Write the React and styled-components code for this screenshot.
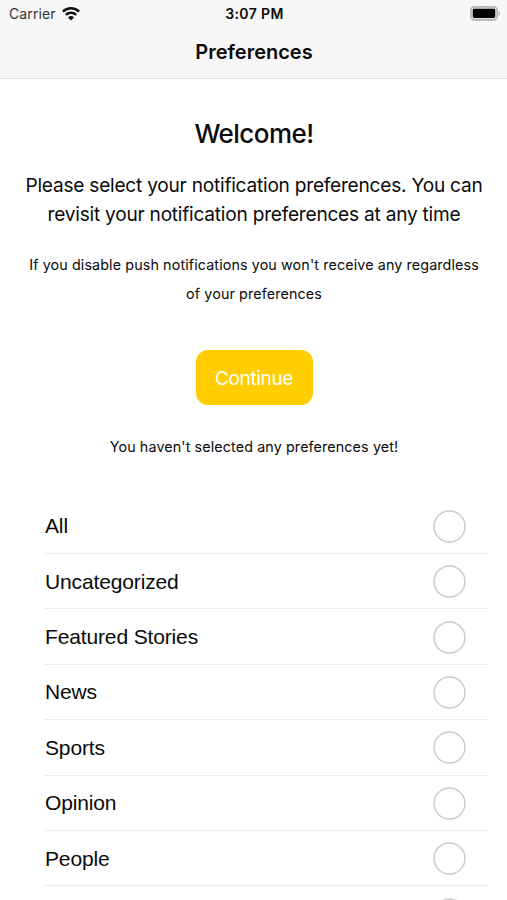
import React, { useState } from "react";
import styled, { createGlobalStyle } from "styled-components";

const GlobalStyle = createGlobalStyle`
  * {
    box-sizing: border-box;
  }
  body {
    margin: 0;
    background: #ffffff;
    color: #0a0a0a;
    font-family: Inter, "Liberation Sans", sans-serif;
  }
`;

const Screen = styled.div`
  display: flex;
  flex-direction: column;
  width: 507px;
  height: 900px;
  overflow: hidden;
`;

const StyledHeader = styled.header`
  flex: none;
  height: 79px;
  background: #f7f7f7;
  border-bottom: 1px solid #e0e0e0;
`;

const StatusBar = styled.div`
  display: grid;
  grid-template-columns: 1fr auto 1fr;
  align-items: center;
  height: 27px;
  padding: 0 7px 0 9px;
`;

const Carrier = styled.span`
  display: flex;
  align-items: center;
  gap: 6px;
  font-size: 14px;
  line-height: 17px;
  letter-spacing: 0.1px;
  color: #333333;
`;

const Clock = styled.span`
  font-size: 14px;
  font-weight: 600;
  line-height: 17px;
  letter-spacing: 0.4px;
`;

const Battery = styled.svg`
  justify-self: end;
  margin-right: -1px;
`;

const StyledTitle = styled.h1`
  margin: 0;
  padding: 12px 0 0 1px;
  font-size: 20px;
  font-weight: 600;
  line-height: 26px;
  letter-spacing: 0;
  text-align: center;
`;

const Intro = styled.section`
  display: flex;
  flex: none;
  flex-direction: column;
  align-items: center;
  height: 419.6px;
  padding: 39px 0 0 1px;
  text-align: center;
  white-space: nowrap;
`;

const StyledHeading = styled.h2`
  margin: 0;
  font-size: 26px;
  font-weight: 450;
  line-height: 32px;
  letter-spacing: -0.55px;
`;

const StyledText = styled.p`
  margin: 21px 0 0;
  font-size: 19.1px;
  line-height: 29.3px;
  letter-spacing: -0.23px;
`;

const StyledNote = styled.p`
  margin: ${({ $top }) => $top}px 0 0;
  font-size: 14.3px;
  line-height: 29.3px;
  letter-spacing: 0.12px;
`;

const Button = styled.button`
  margin-top: 42px;
  width: 117px;
  height: 55px;
  padding: 2px 0 0;
  border: 0;
  border-radius: 12px;
  background: #ffcd00;
  color: #ffffff;
  font-family: inherit;
  font-size: 19px;
  letter-spacing: -0.35px;
`;

const CategoryList = styled.ul`
  margin: 0 19px 0 44px;
  padding: 0;
  list-style: none;
`;

const CategoryRow = styled.li`
  display: flex;
  align-items: center;
  justify-content: space-between;
  height: 55.4px;
  padding: 1px 22px 0 1px;
  border-bottom: 1px solid #ececec;
  font-family: "Liberation Sans", Arial, sans-serif;
  font-size: 21px;
  letter-spacing: -0.14px;
`;

const Radio = styled.button`
  display: flex;
  padding: 0;
  border: 0;
  background: none;
`;

const categories = [
  "All",
  "Uncategorized",
  "Featured Stories",
  "News",
  "Sports",
  "Opinion",
  "People",
  "",
];

function WifiIcon() {
  return (
    <svg width="18" height="14" viewBox="0 0 18 14" fill="none" stroke="#111111">
      <path d="M.9 4.6a11.6 11.6 0 0 1 16.2 0" strokeWidth="2.6" />
      <path d="M3.8 7.8a7.5 7.5 0 0 1 10.4 0" strokeWidth="2.4" />
      <path d="M9 13.4 6 10.4a4.3 4.3 0 0 1 6 0z" fill="#111111" stroke="none" />
    </svg>
  );
}

function BatteryIcon() {
  return (
    <Battery width="31" height="15" viewBox="0 0 31 15">
      <rect x="0.9" y="0.9" width="26.2" height="13" rx="3.4" fill="#e2e2e2" stroke="#b4b4b4" strokeWidth="1.6" />
      <rect x="2.8" y="2.8" width="22.4" height="9.2" rx="1.4" fill="#000000" />
      <path d="M28.5 5c2.2.8 2.2 4 0 4.8z" fill="#b4b4b4" />
    </Battery>
  );
}

function App() {
  const [selected, setSelected] = useState([]);

  // adds or removes the category from the selection
  const toggle = (index) => {
    setSelected(
      selected.includes(index)
        ? selected.filter((item) => item !== index)
        : [...selected, index]
    );
  };

  return (
    <Screen>
      <GlobalStyle />
      <StyledHeader>
        <StatusBar>
          <Carrier>
            Carrier <WifiIcon />
          </Carrier>
          <Clock>3:07 PM</Clock>
          <BatteryIcon />
        </StatusBar>
        <StyledTitle>Preferences</StyledTitle>
      </StyledHeader>
      <Intro>
        <StyledHeading>Welcome!</StyledHeading>
        <StyledText>
          Please select your notification preferences. You can
          <br />
          revisit your notification preferences at any time
        </StyledText>
        <StyledNote $top={20}>
          If you disable push notifications you won't receive any regardless
          <br />
          of your preferences
        </StyledNote>
        <Button>Continue</Button>
        <StyledNote $top={27}>You haven't selected any preferences yet!</StyledNote>
      </Intro>
      <CategoryList>
        {categories.map((name, index) => (
          <CategoryRow key={index}>
            <span>{name}</span>
            <Radio onClick={() => toggle(index)}>
              <svg width="33" height="33" viewBox="0 0 33 33">
                <circle
                  cx="16.5"
                  cy="16.5"
                  r="15.5"
                  fill={selected.includes(index) ? "#ffcd00" : "#ffffff"}
                  stroke="#cccccc"
                  strokeWidth="1.5"
                />
              </svg>
            </Radio>
          </CategoryRow>
        ))}
      </CategoryList>
    </Screen>
  );
}

export default App;
